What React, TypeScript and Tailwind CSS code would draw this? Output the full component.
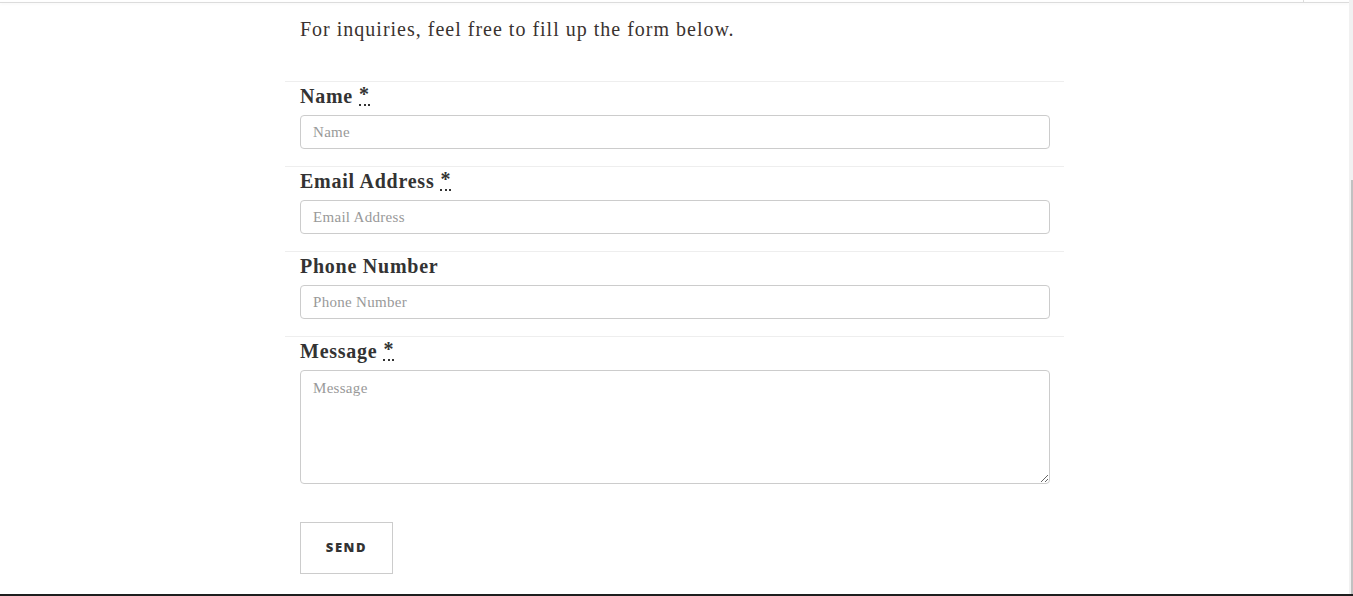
import React from "react";

const serif = { fontFamily: '"Liberation Serif", "Times New Roman", serif' };

function Req() {
  return (
    <abbr
      title="required"
      className="no-underline border-b-[2px] border-dotted border-[#333] ml-[6px] leading-none"
    >
      *
    </abbr>
  );
}

function Row({
  label,
  required,
  children,
  last,
}: {
  label: string;
  required?: boolean;
  children: React.ReactNode;
  last?: boolean;
}) {
  return (
    <div className={`border-t border-[#eeeeee] pl-[15px] pr-[14px] ${last ? "" : "h-[85px]"}`}>
      <label className="flex items-start pt-[2px] h-[33px] text-[20px] leading-[24px] font-bold tracking-[0.75px] text-[#333333]">
        {label}
        {required && <Req />}
      </label>
      {children}
    </div>
  );
}

const inputCls =
  "block w-[750px] h-[34px] border border-[#cccccc] rounded-[4px] px-[12px] text-[15px] tracking-[0.3px] text-[#555] placeholder:text-[#999999] outline-none bg-white";

export default function App() {
  return (
    <div className="h-[596px] w-[1353px] overflow-hidden bg-white flex flex-col" style={serif}>
      <div className="flex flex-1 min-h-0">
        <div className="flex-1 flex flex-col">
          <div className="h-[2px] flex justify-end pr-[45px]">
            <div className="w-px h-[2px] bg-[#dddddd]" />
          </div>
          <div className="h-[1px] bg-[#dcdcdc] shadow-[0_1px_3px_rgba(0,0,0,0.06)]" />
          <div className="w-[779px] mx-auto">
            <p className="pl-[15px] pt-[13px] h-[78px] text-[20px] tracking-[1px] text-[#3a3330] leading-[26px]">
              For inquiries, feel free to fill up the form below.
            </p>
            <Row label="Name" required>
              <input className={inputCls} placeholder="Name" style={serif} />
            </Row>
            <Row label="Email Address" required>
              <input className={inputCls} placeholder="Email Address" style={serif} />
            </Row>
            <Row label="Phone Number">
              <input className={inputCls} placeholder="Phone Number" style={serif} />
            </Row>
            <Row label="Message" required last>
              <textarea
                className="block w-[750px] h-[114px] border border-[#cccccc] rounded-[4px] px-[12px] py-[6px] text-[15px] tracking-[0.3px] text-[#555] placeholder:text-[#999999] outline-none bg-white"
                placeholder="Message"
                style={serif}
              />
              <button
                className="mt-[38px] w-[93px] h-[52px] border border-[#cccccc] bg-white text-[13px] font-extrabold tracking-[0.12em] text-[#333333]"
                style={{ fontFamily: '"Open Sans", "Liberation Sans", sans-serif' }}
              >
                SEND
              </button>
            </Row>
          </div>
        </div>
        <div className="w-[4px] bg-[#f1f1f1] flex flex-col">
          <div className="h-[180px]" />
          <div className="flex-1 ml-[2px] bg-[#c1c1c1]" />
        </div>
      </div>
      <div className="h-[2px] bg-[#1e1e1e] shrink-0" />
    </div>
  );
}
